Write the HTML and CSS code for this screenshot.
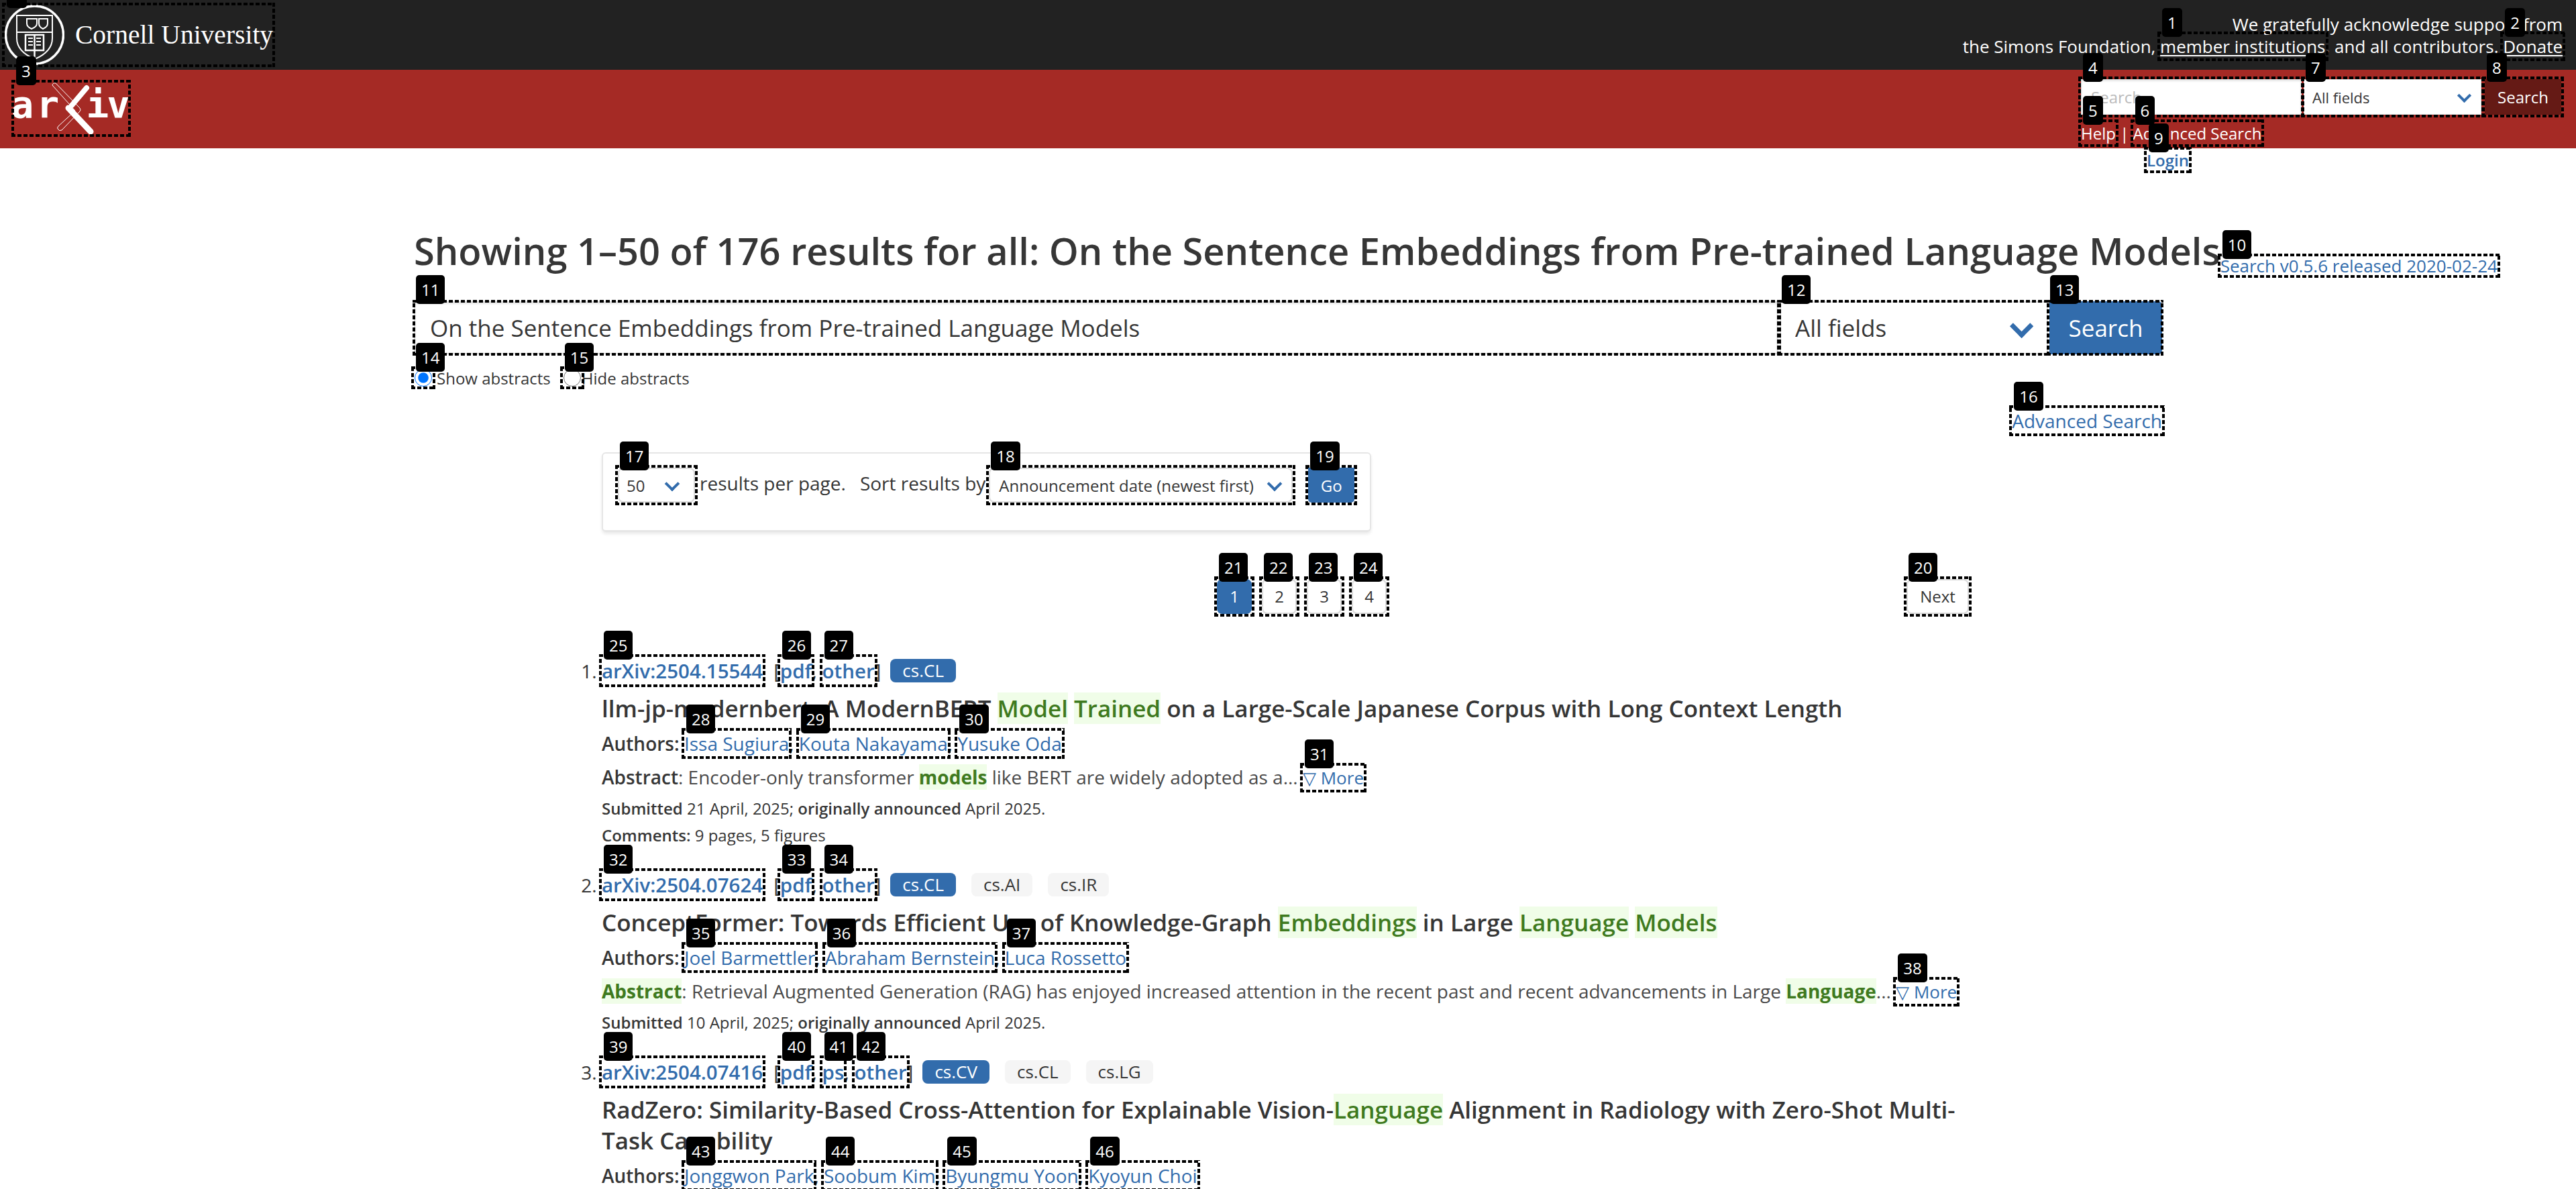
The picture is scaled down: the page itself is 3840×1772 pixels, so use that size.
FILE: index.html
```html
<!DOCTYPE html>
<html lang="en">
<head>
    <meta charset="UTF-8">
    <title>Search | arXiv e-print repository</title>
    <link rel="stylesheet" href="styles.css">
</head>
<body>
    <div class="topbar">
        <a class="mark brand" href="#"><i class="num">0</i>
            <svg class="seal" viewBox="0 0 89 90" fill="none" stroke="#fff" stroke-width="2">
                <circle cx="44.5" cy="45" r="43" stroke-width="3.5"/>
                <path d="M18 16H71V50Q71 70 45 81Q18 70 18 50Z"/>
                <path d="M18 41H71"/>
                <path d="M33 21H48V28Q48 33 40 36Q33 33 33 28Z M51 21H64V28Q64 33 57 36Q51 33 51 28Z"/>
                <path d="M31 45H58V68H31Z M44.5 45V81" stroke-width="2.5"/>
                <path d="M35 50H42M35 55H42M35 60H42M47 50H54M47 55H54M47 60H54" stroke-width="2"/>
            </svg>
            <span class="brand-name">Cornell University</span>
        </a>
        <div class="support">
            We gratefully acknowledge support from<br>
            the Simons Foundation, <a class="mark" href="#">member institutions<i class="num">1</i></a>, and all contributors. <a class="mark" href="#">Donate<i class="num">2</i></a>
        </div>
    </div>

    <div class="redbar">
        <a class="mark logo" href="#"><i class="num">3</i>
            <svg viewBox="0 0 170 77" width="170" height="77">
                <text x="-4.5 33.5 107.5 138.5" y="52" class="logo-text">ariv</text>
                <path d="M57 4Q58 0 62 1L98 38Q100 41 98 43L71 71Q67 73 65 69Q64 67 66 65L91 42Z" fill="#a52a25" stroke="#fff" stroke-width="1"/>
                <path d="M108 8L86 34" stroke="#fff" stroke-width="8" stroke-linecap="round"/>
                <path d="M81 38L114 73" stroke="#fff" stroke-width="9" stroke-linecap="round"/>
            </svg>
        </a>
        <div class="minisearch">
            <form class="minisearch-row">
                <span class="mark ctl input-mini-wrap"><i class="num">4</i><input class="input-mini" type="text" placeholder="Search..."></span>
                <span class="mark ctl select select-mini"><i class="num">7</i><select><option>All fields</option></select></span>
                <span class="mark ctl"><i class="num">8</i><button class="btn-mini" type="button">Search</button></span>
            </form>
            <div class="mini-links"><a class="mark" href="#">Help<i class="num">5</i></a> | <a class="mark" href="#">Advanced Search<i class="num">6</i></a></div>
            <a class="mark login" href="#">Login<i class="num">9</i></a>
        </div>
    </div>

    <main class="content">
        <div class="title-row">
            <h1>Showing 1–50 of 176 results for all: On the Sentence Embeddings from Pre-trained Language Models</h1>
            <a class="mark release" href="#">Search v0.5.6 released 2020-02-24<i class="num">10</i></a>
        </div>

        <form class="bigsearch">
            <span class="mark ctl tight big-input"><i class="num">11</i><input type="text" value="On the Sentence Embeddings from Pre-trained Language Models"></span>
            <span class="mark ctl tight select big-select"><i class="num">12</i><select><option>All fields</option></select></span>
            <span class="mark ctl tight"><i class="num">13</i><button class="btn-big" type="button">Search</button></span>
        </form>

        <div class="radios">
            <span class="mark radio"><i class="num">14</i><input type="radio" name="abs" checked></span><label class="radio-label">Show abstracts</label>
            <span class="mark radio radio-two"><i class="num">15</i><input type="radio" name="abs"></span><label class="radio-label">Hide abstracts</label>
        </div>
        <div class="adv-row"><a class="mark" href="#">Advanced Search<i class="num">16</i></a></div>

        <div class="results-wrap">
            <div class="sortbox">
                <span class="mark ctl select sort-size"><i class="num">17</i><select><option>50</option></select></span>
                <span class="sort-text sort-first">results per page.</span>
                <span class="sort-text sort-second">Sort results by</span>
                <span class="mark ctl select sort-order"><i class="num">18</i><select><option>Announcement date (newest first)</option></select></span>
                <span class="mark ctl go-wrap"><i class="num">19</i><button class="btn-go" type="button">Go</button></span>
            </div>

            <nav class="pagination">
                <a class="mark page" href="#"><span class="page-box current">1</span><i class="num">21</i></a>
                <a class="mark page" href="#"><span class="page-box">2</span><i class="num">22</i></a>
                <a class="mark page" href="#"><span class="page-box">3</span><i class="num">23</i></a>
                <a class="mark page" href="#"><span class="page-box">4</span><i class="num">24</i></a>
                <a class="mark page next" href="#"><span class="page-box">Next</span><i class="num">20</i></a>
            </nav>

            <ol class="results">
                <li class="result">
                    <div class="result-head">
                        <span><a class="mark id" href="#">arXiv:2504.15544<i class="num">25</i></a><span class="files">[<a class="mark" href="#">pdf<i class="num">26</i></a>, <a class="mark" href="#">other<i class="num">27</i></a>]</span></span>
                        <span class="tags"><span class="tag tag-primary">cs.CL</span></span>
                    </div>
                    <p class="title">llm-jp-modernbert: A ModernBERT <span class="hl">Model</span> <span class="hl">Trained</span> on a Large-Scale Japanese Corpus with Long Context Length</p>
                    <p class="authors"><b>Authors:</b> <a class="mark" href="#">Issa Sugiura<i class="num">28</i></a>, <a class="mark" href="#">Kouta Nakayama<i class="num">29</i></a>, <a class="mark" href="#">Yusuke Oda<i class="num">30</i></a></p>
                    <p class="abstract"><b>Abstract</b>: Encoder-only transformer <b class="hl">models</b> like BERT are widely adopted as a... <a class="mark more" href="#">▽ More<i class="num">31</i></a></p>
                    <p class="meta"><b>Submitted</b> 21 April, 2025; <b>originally announced</b> April 2025.</p>
                    <p class="meta comments"><b>Comments:</b> 9 pages, 5 figures</p>
                </li>
                <li class="result">
                    <div class="result-head">
                        <span><a class="mark id" href="#">arXiv:2504.07624<i class="num">32</i></a><span class="files">[<a class="mark" href="#">pdf<i class="num">33</i></a>, <a class="mark" href="#">other<i class="num">34</i></a>]</span></span>
                        <span class="tags"><span class="tag tag-primary">cs.CL</span><span class="tag">cs.AI</span><span class="tag">cs.IR</span></span>
                    </div>
                    <p class="title">ConceptFormer: Towards Efficient Use of Knowledge-Graph <span class="hl">Embeddings</span> in Large <span class="hl">Language</span> <span class="hl">Models</span></p>
                    <p class="authors"><b>Authors:</b> <a class="mark" href="#">Joel Barmettler<i class="num">35</i></a>, <a class="mark" href="#">Abraham Bernstein<i class="num">36</i></a>, <a class="mark" href="#">Luca Rossetto<i class="num">37</i></a></p>
                    <p class="abstract"><b class="hl">Abstract</b>: Retrieval Augmented Generation (RAG) has enjoyed increased attention in the recent past and recent advancements in Large <b class="hl">Language</b>... <a class="mark more" href="#">▽ More<i class="num">38</i></a></p>
                    <p class="meta"><b>Submitted</b> 10 April, 2025; <b>originally announced</b> April 2025.</p>
                </li>
                <li class="result">
                    <div class="result-head">
                        <span><a class="mark id" href="#">arXiv:2504.07416<i class="num">39</i></a><span class="files">[<a class="mark" href="#">pdf<i class="num">40</i></a>, <a class="mark" href="#">ps<i class="num">41</i></a>, <a class="mark" href="#">other<i class="num">42</i></a>]</span></span>
                        <span class="tags"><span class="tag tag-primary">cs.CV</span><span class="tag">cs.CL</span><span class="tag">cs.LG</span></span>
                    </div>
                    <p class="title">RadZero: Similarity-Based Cross-Attention for Explainable Vision-<span class="hl">Language</span> Alignment in Radiology with Zero-Shot Multi-Task Capability</p>
                    <p class="authors"><b>Authors:</b> <a class="mark" href="#">Jonggwon Park<i class="num">43</i></a>, <a class="mark" href="#">Soobum Kim<i class="num">44</i></a>, <a class="mark" href="#">Byungmu Yoon<i class="num">45</i></a>, <a class="mark" href="#">Kyoyun Choi<i class="num">46</i></a></p>
                </li>
            </ol>
        </div>
    </main>
</body>
</html>
```

FILE: styles.css
```css
html {
    overflow: hidden;
}
body {
    margin: 0;
    font-family: "Open Sans", "Noto Sans", sans-serif;
    color: #363636;
    background-color: #fff;
}
a {
    color: #326cac;
    text-decoration: none;
}
p {
    margin: 0;
}
b {
    font-weight: 600;
}

/* numbered overlay boxes */
.mark {
    position: relative;
}
.mark::after {
    content: "";
    position: absolute;
    inset: -4px;
    z-index: 4;
    pointer-events: none;
    background:
        repeating-linear-gradient(90deg, #000 0 6px, transparent 6px 9px) top / 100% 4px no-repeat,
        repeating-linear-gradient(90deg, #000 0 6px, transparent 6px 9px) bottom / 100% 4px no-repeat,
        repeating-linear-gradient(0deg, #000 0 6px, transparent 6px 9px) left / 4px 100% no-repeat,
        repeating-linear-gradient(0deg, #000 0 6px, transparent 6px 9px) right / 4px 100% no-repeat;
}
.ctl {
    display: block;
}
.tight::after {
    inset: -2px;
}
.num {
    position: absolute;
    top: -39px;
    left: 3px;
    z-index: 5;
    height: 43px;
    padding: 0 8px;
    border-radius: 5px;
    background-color: #000;
    color: #fff;
    font: normal 400 24px/43px "Open Sans", sans-serif;
}

/* top bar */
.topbar {
    display: flex;
    justify-content: space-between;
    height: 104px;
    padding: 8px 20px 0 7px;
    box-sizing: border-box;
    background-color: #222;
}
.brand {
    display: flex;
    align-items: center;
    width: 399px;
    height: 88px;
    color: #fff;
}
.seal {
    width: 89px;
    height: 90px;
    flex-shrink: 0;
}
.brand-name {
    margin-left: 16px;
    font: 39.5px "Liberation Serif", serif;
    white-space: nowrap;
}
.support {
    padding-top: 12px;
    color: #fff;
    font-size: 26px;
    line-height: 33px;
    text-align: right;
}
.support a {
    color: #fff;
    text-decoration: underline;
    text-underline-offset: 3px;
}
.support .num {
    display: inline-block;
}

/* red search bar */
.redbar {
    display: flex;
    justify-content: space-between;
    height: 117px;
    padding-right: 22px;
    background-color: #a52a25;
}
.logo {
    display: block;
    width: 170px;
    height: 77px;
    margin: 19px 0 0 21px;
}
.logo svg {
    overflow: visible;
}
.logo-text {
    fill: #fff;
    font: 700 56px "DejaVu Sans Mono", monospace;
}
.minisearch {
    width: 716px;
    padding-top: 14px;
}
.minisearch-row {
    display: flex;
    height: 53px;
}
.input-mini-wrap {
    margin-right: 3px;
}
.input-mini {
    display: block;
    width: 329px;
    height: 53px;
    padding: 0 14px;
    box-sizing: border-box;
    border: 1px solid #dbdbdb;
    box-shadow: inset 0 2px 3px rgba(10, 10, 10, 0.1);
    font: 24px "Open Sans", sans-serif;
}
.input-mini::placeholder {
    color: #bbb;
}
.select {
    background-color: #fff;
}
.select select {
    display: block;
    width: 100%;
    height: 100%;
    padding: 0 0 0 12px;
    border: 1px solid #dbdbdb;
    border-radius: 0;
    background: none;
    color: #363636;
    font: inherit;
    appearance: none;
}
.select::before {
    content: "";
    position: absolute;
    top: 50%;
    right: 0.8em;
    width: 0.5em;
    height: 0.5em;
    margin-top: -0.42em;
    border-left: 0.2em solid #326cac;
    border-bottom: 0.2em solid #326cac;
    transform: rotate(-45deg);
    pointer-events: none;
}
.select-mini {
    width: 265px;
    height: 53px;
    margin-right: 5px;
    font-size: 22px;
}
.btn-mini {
    display: block;
    width: 114px;
    height: 53px;
    border: none;
    background-color: #651a15;
    color: #fff;
    font: 24px "Open Sans", sans-serif;
}
.mini-links {
    margin-top: 11px;
    color: #fff;
    font-size: 24px;
    line-height: 33px;
}
.mini-links a {
    color: #fff;
}
.login {
    display: inline-block;
    margin: 8px 0 0 98px;
    font-size: 24px;
    font-weight: 600;
    line-height: 31px;
}

/* page content */
.content {
    padding-left: 617px;
}
.title-row {
    display: flex;
    align-items: flex-end;
    margin-top: 113px;
    white-space: nowrap;
}
h1 {
    margin: 0;
    font-size: 56px;
    font-weight: 600;
    line-height: 78px;
}
.release {
    display: block;
    margin-bottom: 2px;
    font-size: 26px;
    line-height: 28px;
}
.bigsearch {
    display: flex;
    margin-top: 37px;
    width: 2606px;
    height: 79px;
}
.big-input {
    flex: 1;
}
.big-input input {
    display: block;
    width: 100%;
    height: 79px;
    padding: 0 22px;
    box-sizing: border-box;
    border: 2px solid #dbdbdb;
    box-shadow: inset 0 2px 3px rgba(10, 10, 10, 0.1);
    color: #363636;
    font: 35px "Open Sans", sans-serif;
}
.big-select {
    width: 400px;
    height: 79px;
    margin-left: 2px;
    font-size: 35px;
}
.big-select select {
    padding-left: 21px;
    border-width: 2px;
}
.btn-big {
    display: block;
    width: 168px;
    height: 79px;
    margin-left: 2px;
    border: none;
    border-radius: 0 6px 6px 0;
    background-color: #326cac;
    color: #fff;
    font: 35px "Open Sans", sans-serif;
}
.radios {
    display: flex;
    align-items: center;
    height: 32px;
    margin-top: 19px;
    font-size: 24px;
}
.radio {
    display: block;
    height: 26px;
}
.radio input {
    display: block;
    width: 26px;
    height: 26px;
    margin: 0 1px;
}
.radio-label {
    margin-left: 6px;
}
.radio-two {
    margin-left: 18px;
}
.radio-two + .radio-label {
    margin-left: 0;
}
.adv-row {
    width: 2606px;
    margin-top: 29px;
    font-size: 28px;
    line-height: 38px;
    text-align: right;
}
.results-wrap {
    width: 2041px;
    margin-left: 280px;
}
.sortbox {
    display: flex;
    align-items: flex-start;
    width: 1147px;
    height: 119px;
    margin-top: 28px;
    padding: 21px 22px;
    box-sizing: border-box;
    border: 2px solid #e6e6e6;
    border-bottom-width: 3px;
    border-radius: 6px;
    box-shadow: 0 3px 4px rgba(10, 10, 10, 0.08);
    font-size: 28px;
}
.sort-size,
.sort-order {
    height: 52px;
    font-size: 24px;
    border-radius: 8px;
}
.sort-size select,
.sort-order select {
    padding-left: 11px;
    border: 2px solid #dbdbdb;
    border-radius: 8px;
}
.sort-size {
    width: 115px;
}
.sort-order {
    width: 453px;
}
.sort-size::before {
    right: 1.1em;
}
.sort-order select {
    padding-left: 13px;
}
.sort-text {
    margin-top: 5px;
    line-height: 36px;
}
.sort-first {
    margin-left: 7px;
}
.sort-second {
    margin: 5px 5px 0 21px;
}
.go-wrap {
    margin-left: 23px;
}
.btn-go {
    display: block;
    width: 69px;
    height: 52px;
    border: none;
    border-radius: 0 0 5px 5px;
    background-color: #326cac;
    color: #fff;
    font: 24px "Open Sans", sans-serif;
}
.pagination {
    display: flex;
    margin-top: 70px;
    padding-left: 917px;
}
.page {
    display: block;
    width: 52px;
    height: 52px;
    margin-right: 15px;
    color: #363636;
    font-size: 24px;
    text-align: center;
}
.page-box {
    display: block;
    height: 52px;
    box-sizing: border-box;
    border: 2px solid #dbdbdb;
    border-radius: 8px;
    line-height: 48px;
}
.current {
    border-color: #326cac;
    background-color: #326cac;
    color: #fff;
}
.next {
    width: 93px;
    margin: 0 3px 0 auto;
}

/* results */
.results {
    margin: 64px 0 0;
    padding: 0;
    font-size: 28px;
    list-style-position: outside;
}
.result-head {
    display: flex;
    align-items: center;
    height: 41px;
}
.id {
    font-size: 29.5px;
}
.files {
    margin-left: 16px;
    font-size: 29.5px;
}
.result-head a {
    font-weight: 600;
}
.tags {
    display: flex;
    margin-left: 14px;
    gap: 23px;
}
.tag {
    height: 35px;
    padding: 0 18px;
    border-radius: 8px;
    background-color: #f5f5f5;
    font-size: 26px;
    line-height: 35px;
}
.tag-primary {
    background-color: #326cac;
    color: #fff;
}
.title {
    margin-top: 13px;
    font-size: 35px;
    font-weight: 600;
    line-height: 46px;
}
.hl {
    background-color: #f0fde8;
    color: #3f7a1f;
}
b.hl {
    font-weight: 700;
}
.authors {
    margin-top: 8px;
    font-size: 28px;
    line-height: 42px;
}
.abstract {
    margin-top: 8px;
    font-size: 28px;
    line-height: 42px;
    color: #4a4a4a;
}
.abstract > b:not(.hl) {
    color: #363636;
}
.more {
    font-size: 26px;
}
.meta {
    margin-top: 8px;
    font-size: 24px;
    line-height: 33px;
}
.comments {
    margin-top: 7px;
}
.result {
    margin-bottom: 37px;
}
```
